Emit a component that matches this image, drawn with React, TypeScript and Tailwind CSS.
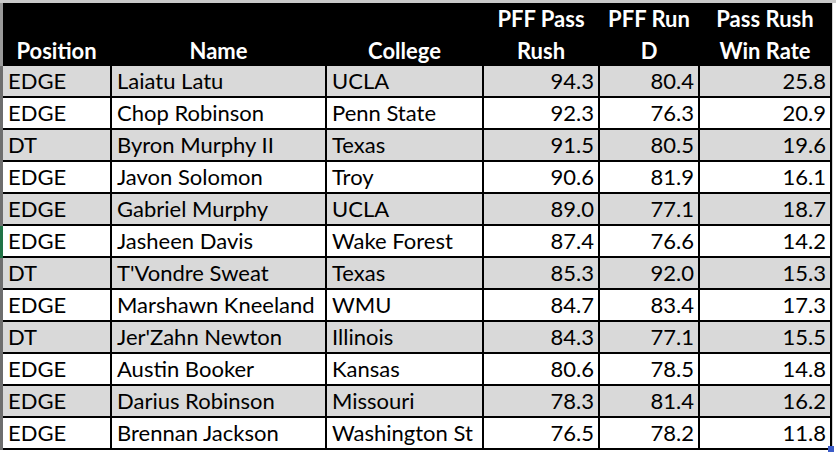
const ROWS = [
  ["EDGE", "Laiatu Latu", "UCLA", "94.3", "80.4", "25.8"],
  ["EDGE", "Chop Robinson", "Penn State", "92.3", "76.3", "20.9"],
  ["DT", "Byron Murphy II", "Texas", "91.5", "80.5", "19.6"],
  ["EDGE", "Javon Solomon", "Troy", "90.6", "81.9", "16.1"],
  ["EDGE", "Gabriel Murphy", "UCLA", "89.0", "77.1", "18.7"],
  ["EDGE", "Jasheen Davis", "Wake Forest", "87.4", "76.6", "14.2"],
  ["DT", "T'Vondre Sweat", "Texas", "85.3", "92.0", "15.3"],
  ["EDGE", "Marshawn Kneeland", "WMU", "84.7", "83.4", "17.3"],
  ["DT", "Jer'Zahn Newton", "Illinois", "84.3", "77.1", "15.5"],
  ["EDGE", "Austin Booker", "Kansas", "80.6", "78.5", "14.8"],
  ["EDGE", "Darius Robinson", "Missouri", "78.3", "81.4", "16.2"],
  ["EDGE", "Brennan Jackson", "Washington St", "76.5", "78.2", "11.8"],
];

const HEADERS = [
  ["Position"],
  ["Name"],
  ["College"],
  ["PFF Pass", "Rush"],
  ["PFF Run", "D"],
  ["Pass Rush", "Win Rate"],
];

const GRID = "grid grid-cols-[109px_215px_157px_116px_100px_132px]";

export default function App() {
  return (
    <div className="relative w-[836px] h-[454px] overflow-hidden bg-white font-['Lato',sans-serif] text-[22px] text-black">
      <div className="h-[3px] bg-[#c9c9c9]" />
      <div className="flex">
        {/* row header gutter */}
        <div className="w-[3px] flex flex-col">
          <div className="h-[63px] bg-[#9a9a9a]" />
          {ROWS.map((_, i) => (
            <div
              key={i}
              className={`h-[32px] ${i === 5 ? "bg-[#217346]" : "bg-[#6e6e6e]"}`}
            />
          ))}
        </div>

        <div className="flex flex-col">
          {/* header */}
          <div className={`${GRID} h-[63px] bg-black text-white font-bold`}>
            {HEADERS.map((lines, i) => (
              <div
                key={i}
                className="flex flex-col items-center justify-end leading-[32px] border-r-2 border-black"
              >
                {lines.map((l) => (
                  <span key={l}>{l}</span>
                ))}
              </div>
            ))}
          </div>

          {ROWS.map((row, r) => (
            <div
              key={r}
              className={`${GRID} h-[32px] ${r % 2 === 0 ? "bg-[#d9d9d9]" : "bg-white"}`}
            >
              {row.map((cell, c) => (
                <div
                  key={c}
                  className={`flex items-center border-r-2 border-b-2 border-black leading-none whitespace-nowrap ${
                    c < 3 ? "justify-start pl-[5px]" : "justify-end pr-[4px]"
                  } ${r === 0 ? "border-t-2 -mt-[2px] h-[34px]" : ""}`}
                >
                  {cell}
                </div>
              ))}
            </div>
          ))}
        </div>

        <div className="flex-1 flex">
          <div className="w-[1px] bg-[#d4d4d4]" />
        </div>
      </div>
      {/* fill handle */}
      <div className="absolute left-[828px] top-[446px] w-[6px] h-[6px] bg-[#3b5bc7]" />
    </div>
  );
}
